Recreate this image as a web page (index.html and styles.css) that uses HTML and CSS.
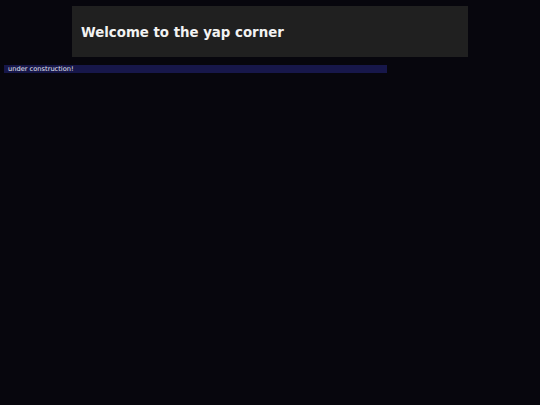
FILE: index.html
```html
<!DOCTYPE html>
<html>
<head>
<meta charset="utf-8">
<link rel="stylesheet" href="styles.css">
</head>
<body>
<header class="hero">
  <h1 class="hero-title">Welcome to the yap corner</h1>
</header>
<div class="notice">under construction!</div>
</body>
</html>
```
FILE: styles.css
```css
html, body {
  margin: 0;
  padding: 0;
  background: #07060d;
  height: 100%;
}
body {
  font-family: "DejaVu Sans", Verdana, sans-serif;
  color: #eeeeee;
}
.hero {
  width: 396px;
  height: 51px;
  margin: 6px auto 0;
  background: #202020;
  box-sizing: border-box;
  padding: 0 9px;
  display: flex;
  align-items: center;
}
.hero-title {
  margin: 0;
  font-size: 13.33px;
  font-weight: bold;
  color: #f2f2f2;
  line-height: 1;
  padding-top: 3px;
}
.notice {
  width: 383px;
  height: 8px;
  margin: 8px 0 0 4px;
  background: #17174a;
  color: #e4e4f0;
  font-size: 6.67px;
  line-height: 8px;
  padding-left: 4px;
  box-sizing: border-box;
}
```
